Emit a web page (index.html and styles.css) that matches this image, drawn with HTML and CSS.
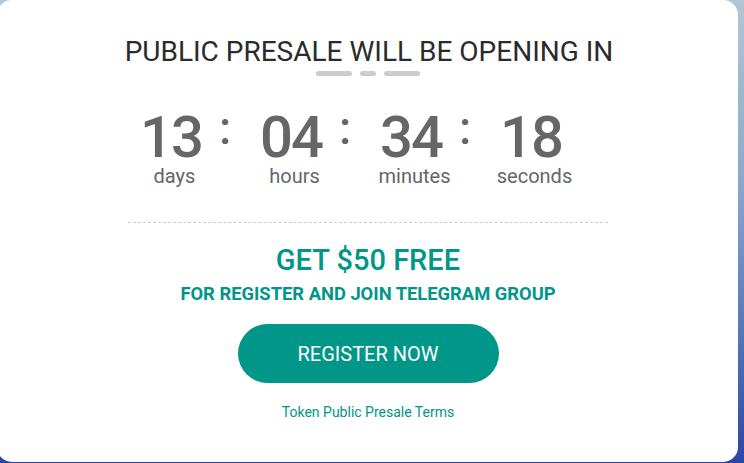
FILE: index.html
```html
<!DOCTYPE html>
<html lang="en">
<head>
<meta charset="utf-8">
<title>Public Presale</title>
<link rel="stylesheet" href="styles.css">
</head>
<body>
<main class="stage">
  <section class="card">
    <h1 class="title">PUBLIC PRESALE WILL BE OPENING IN</h1>
    <div class="bars"><span class="bar long"></span><span class="bar short"></span><span class="bar long"></span></div>
    <div class="countdown">
      <div class="unit"><span class="num">13</span><span class="label">days</span></div>
      <span class="colon">:</span>
      <div class="unit"><span class="num">04</span><span class="label">hours</span></div>
      <span class="colon">:</span>
      <div class="unit"><span class="num">34</span><span class="label">minutes</span></div>
      <span class="colon">:</span>
      <div class="unit"><span class="num">18</span><span class="label">seconds</span></div>
    </div>
    <hr class="divider">
    <h2 class="offer">GET $50 FREE</h2>
    <p class="sub">FOR REGISTER AND JOIN TELEGRAM GROUP</p>
    <a class="btn" href="#">REGISTER NOW</a>
    <a class="terms" href="#">Token Public Presale Terms</a>
  </section>
</main>
</body>
</html>
```
FILE: styles.css
```css
html, body {
  margin: 0;
  padding: 0;
  height: 463px;
  overflow: hidden;
}
body {
  font-family: Roboto, "Liberation Sans", sans-serif;
  background: linear-gradient(to bottom, #b2c6d5 0%, #8aa8cb 40%, #4d72b8 75%, #2a46a3 100%);
}
.stage {
  width: 744px;
  height: 463px;
}
.card {
  margin-left: -3px;
  width: 741px;
  height: 462px;
  background: #ffffff;
  border-radius: 15px;
  box-sizing: border-box;
  padding-top: 35px;
  padding-left: 1px;
  display: flex;
  flex-direction: column;
  align-items: center;
}
.title {
  margin: 0 0 0 2px;
  font-size: 28px;
  line-height: 34px;
  font-weight: 400;
  color: #2b2b2b;
}
.bars {
  display: flex;
  gap: 8px;
  margin-top: 2px;
}
.bar {
  height: 5px;
  border-radius: 3px;
  background: #cccccc;
}
.bar.long { width: 36px; }
.bar.short { width: 16px; }
.countdown {
  display: flex;
  margin-top: 33px;
  padding-right: 34px;
  color: #666666;
}
.unit {
  width: 96px;
  display: flex;
  flex-direction: column;
  align-items: center;
}
.num {
  font-size: 58px;
  line-height: 56px;
  font-weight: 500;
  letter-spacing: -2px;
}
.label {
  font-size: 20px;
  line-height: 22px;
  padding-left: 7px;
}
.colon {
  width: 24px;
  box-sizing: border-box;
  padding-right: 12px;
  text-align: center;
  font-size: 46px;
  line-height: 39px;
  font-weight: 500;
}
.divider {
  width: 480px;
  margin: 35px 0 0;
  border: 0;
  border-top: 1px dashed #cccccc;
}
.offer {
  margin: 20px 0 0;
  font-size: 29px;
  line-height: 34px;
  font-weight: 500;
  color: #009688;
}
.sub {
  margin: 6px 0 0;
  font-size: 18.35px;
  line-height: 22px;
  font-weight: 700;
  color: #009688;
}
.btn {
  margin-top: 19px;
  width: 261px;
  height: 59px;
  border-radius: 30px;
  background: #009688;
  color: #ffffff;
  text-decoration: none;
  font-size: 20px;
  display: flex;
  align-items: center;
  justify-content: center;
}
.terms {
  margin-top: 20px;
  font-size: 14px;
  line-height: 18px;
  color: #009688;
  text-decoration: none;
}
```
